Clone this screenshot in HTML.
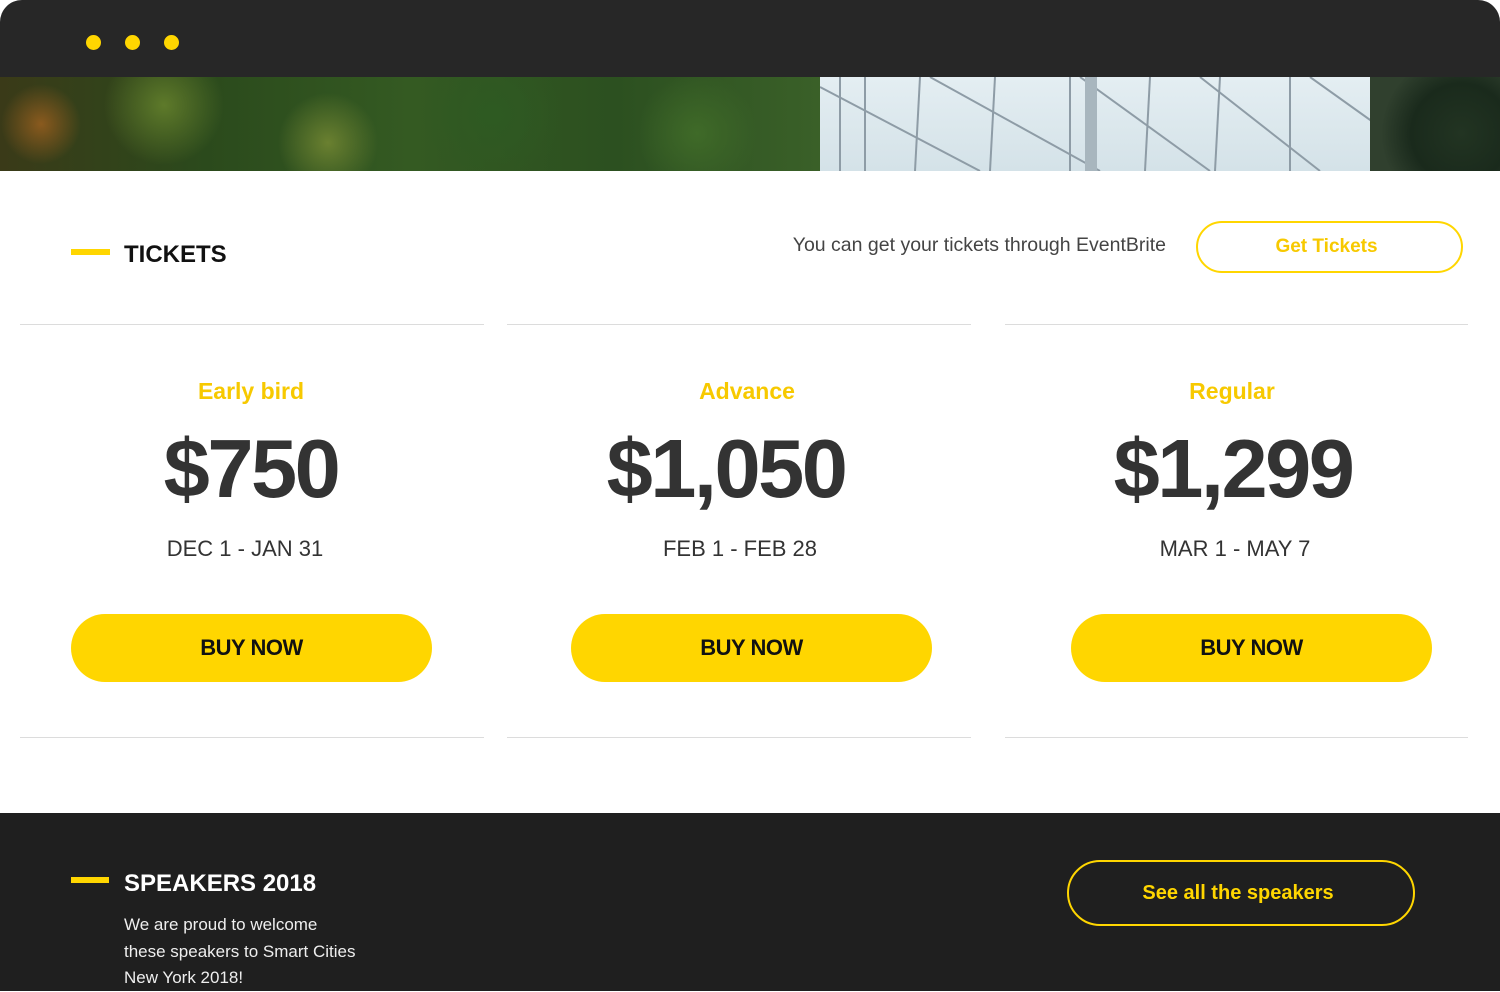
<!DOCTYPE html>
<html><head><meta charset="utf-8">
<style>
*{margin:0;padding:0;box-sizing:border-box}
html,body{width:1500px;height:991px;overflow:hidden;background:#fff;font-family:"Liberation Sans",sans-serif}
.top{position:absolute;left:0;top:0;width:1500px;height:77px;background:#272727;border-radius:22px 22px 0 0}
.dot{position:absolute;top:35px;width:15px;height:15px;border-radius:50%;background:#FFD600}
.hero{position:absolute;left:0;top:77px;width:1500px;height:94px;overflow:hidden;background:#2e4a1c}
.foliage{position:absolute;left:0;top:0;width:820px;height:94px;background:
radial-gradient(circle at 5% 50%,#8a5a1e 0,transparent 40px),
radial-gradient(circle at 20% 30%,#5e7a2a 0,transparent 60px),
radial-gradient(circle at 40% 70%,#6a8030 0,transparent 50px),
radial-gradient(circle at 60% 40%,#2e5a22 0,transparent 70px),
radial-gradient(circle at 85% 60%,#3f6a28 0,transparent 60px),
linear-gradient(90deg,#3a3a18,#2b4a1c 25%,#345a22 50%,#2c5020 75%,#3a6028)}
.glass{position:absolute;left:820px;top:0;width:560px;height:94px;background:linear-gradient(180deg,#e4eef2,#d4e2e8)}
.tree{position:absolute;left:1370px;top:0;width:130px;height:94px;background:radial-gradient(circle at 70% 60%,#223422 0,#1a2a1c 50px,#30402e 80px)}
.hr{position:absolute;height:1px;background:#dcdcdc}
.bar{position:absolute;height:6px;background:#FFD600}
.h{position:absolute;font-weight:bold;font-size:24px}
.t{position:absolute;width:400px;text-align:center;color:#F7C900;font-weight:bold;font-size:23px}
.p{position:absolute;width:500px;text-align:center;color:#333;font-weight:bold;font-size:83px;letter-spacing:-2.5px}
.d{position:absolute;width:400px;text-align:center;color:#333;font-size:22px}
.b{position:absolute;top:614px;width:361px;height:68px;border-radius:34px;background:#FFD600;color:#111;font-weight:bold;font-size:22px;text-align:center;line-height:68px;letter-spacing:-0.5px}
.dark{position:absolute;left:0;top:813px;width:1500px;height:178px;background:#1f1f1f}
</style></head><body>
<div class="top">
<div class="dot" style="left:86px"></div><div class="dot" style="left:125px"></div><div class="dot" style="left:164px"></div>
</div>
<div class="hero">
<div class="foliage"></div>
<div class="glass">
<svg width="560" height="94" style="position:absolute;left:0;top:0">
<g stroke="#8e9ca6" stroke-width="2" fill="none">
<line x1="20" y1="0" x2="20" y2="94"/><line x1="45" y1="0" x2="45" y2="94"/><line x1="100" y1="0" x2="95" y2="94"/><line x1="175" y1="0" x2="170" y2="94"/><line x1="250" y1="0" x2="250" y2="94"/><line x1="330" y1="0" x2="325" y2="94"/><line x1="400" y1="0" x2="395" y2="94"/><line x1="470" y1="0" x2="470" y2="94"/>
<line x1="0" y1="10" x2="160" y2="94"/><line x1="110" y1="0" x2="280" y2="94"/><line x1="260" y1="0" x2="390" y2="94"/><line x1="380" y1="0" x2="500" y2="94"/><line x1="490" y1="0" x2="560" y2="50"/>
</g>
<rect x="265" y="0" width="12" height="94" fill="#a8b6be"/>
</svg>
</div>
<div class="tree"></div>
</div>

<div class="bar" style="left:71px;top:249px;width:39px"></div>
<div class="h" style="left:124px;top:241px;color:#111">TICKETS</div>
<div style="position:absolute;right:334px;top:234px;font-size:19.5px;color:#444">You can get your tickets through EventBrite</div>
<div style="position:absolute;left:1196px;top:221px;width:267px;height:52px;border:2px solid #FFD600;border-radius:26px;color:#F7C900;font-weight:bold;font-size:19px;text-align:center;line-height:48px;padding-right:6px">Get Tickets</div>

<div class="hr" style="left:20px;top:324px;width:464px"></div>
<div class="hr" style="left:507px;top:324px;width:464px"></div>
<div class="hr" style="left:1005px;top:324px;width:463px"></div>
<div class="hr" style="left:20px;top:737px;width:464px"></div>
<div class="hr" style="left:507px;top:737px;width:464px"></div>
<div class="hr" style="left:1005px;top:737px;width:463px"></div>

<div class="t" style="left:51px;top:378px">Early bird</div>
<div class="t" style="left:547px;top:378px">Advance</div>
<div class="t" style="left:1032px;top:378px">Regular</div>
<div class="p" style="left:1px;top:421px">$750</div>
<div class="p" style="left:476px;top:421px">$1,050</div>
<div class="p" style="left:983px;top:421px">$1,299</div>
<div class="d" style="left:45px;top:536px">DEC 1 - JAN 31</div>
<div class="d" style="left:540px;top:536px">FEB 1 - FEB 28</div>
<div class="d" style="left:1035px;top:536px">MAR 1 - MAY 7</div>
<div class="b" style="left:71px">BUY NOW</div>
<div class="b" style="left:571px">BUY NOW</div>
<div class="b" style="left:1071px">BUY NOW</div>

<div class="dark">
<div class="bar" style="left:71px;top:64px;width:38px"></div>
<div class="h" style="left:124px;top:57px;color:#fff">SPEAKERS 2018</div>
<div style="position:absolute;left:124px;top:99px;color:#eee;font-size:17px;line-height:26.5px">We are proud to welcome<br>these speakers to Smart Cities<br>New York 2018!</div>
<div style="position:absolute;left:1067px;top:47px;width:348px;height:66px;border:2px solid #FFD600;border-radius:33px;color:#FFD600;font-weight:bold;font-size:20px;text-align:center;line-height:62px;padding-right:6px">See all the speakers</div>
</div>
</body></html>
